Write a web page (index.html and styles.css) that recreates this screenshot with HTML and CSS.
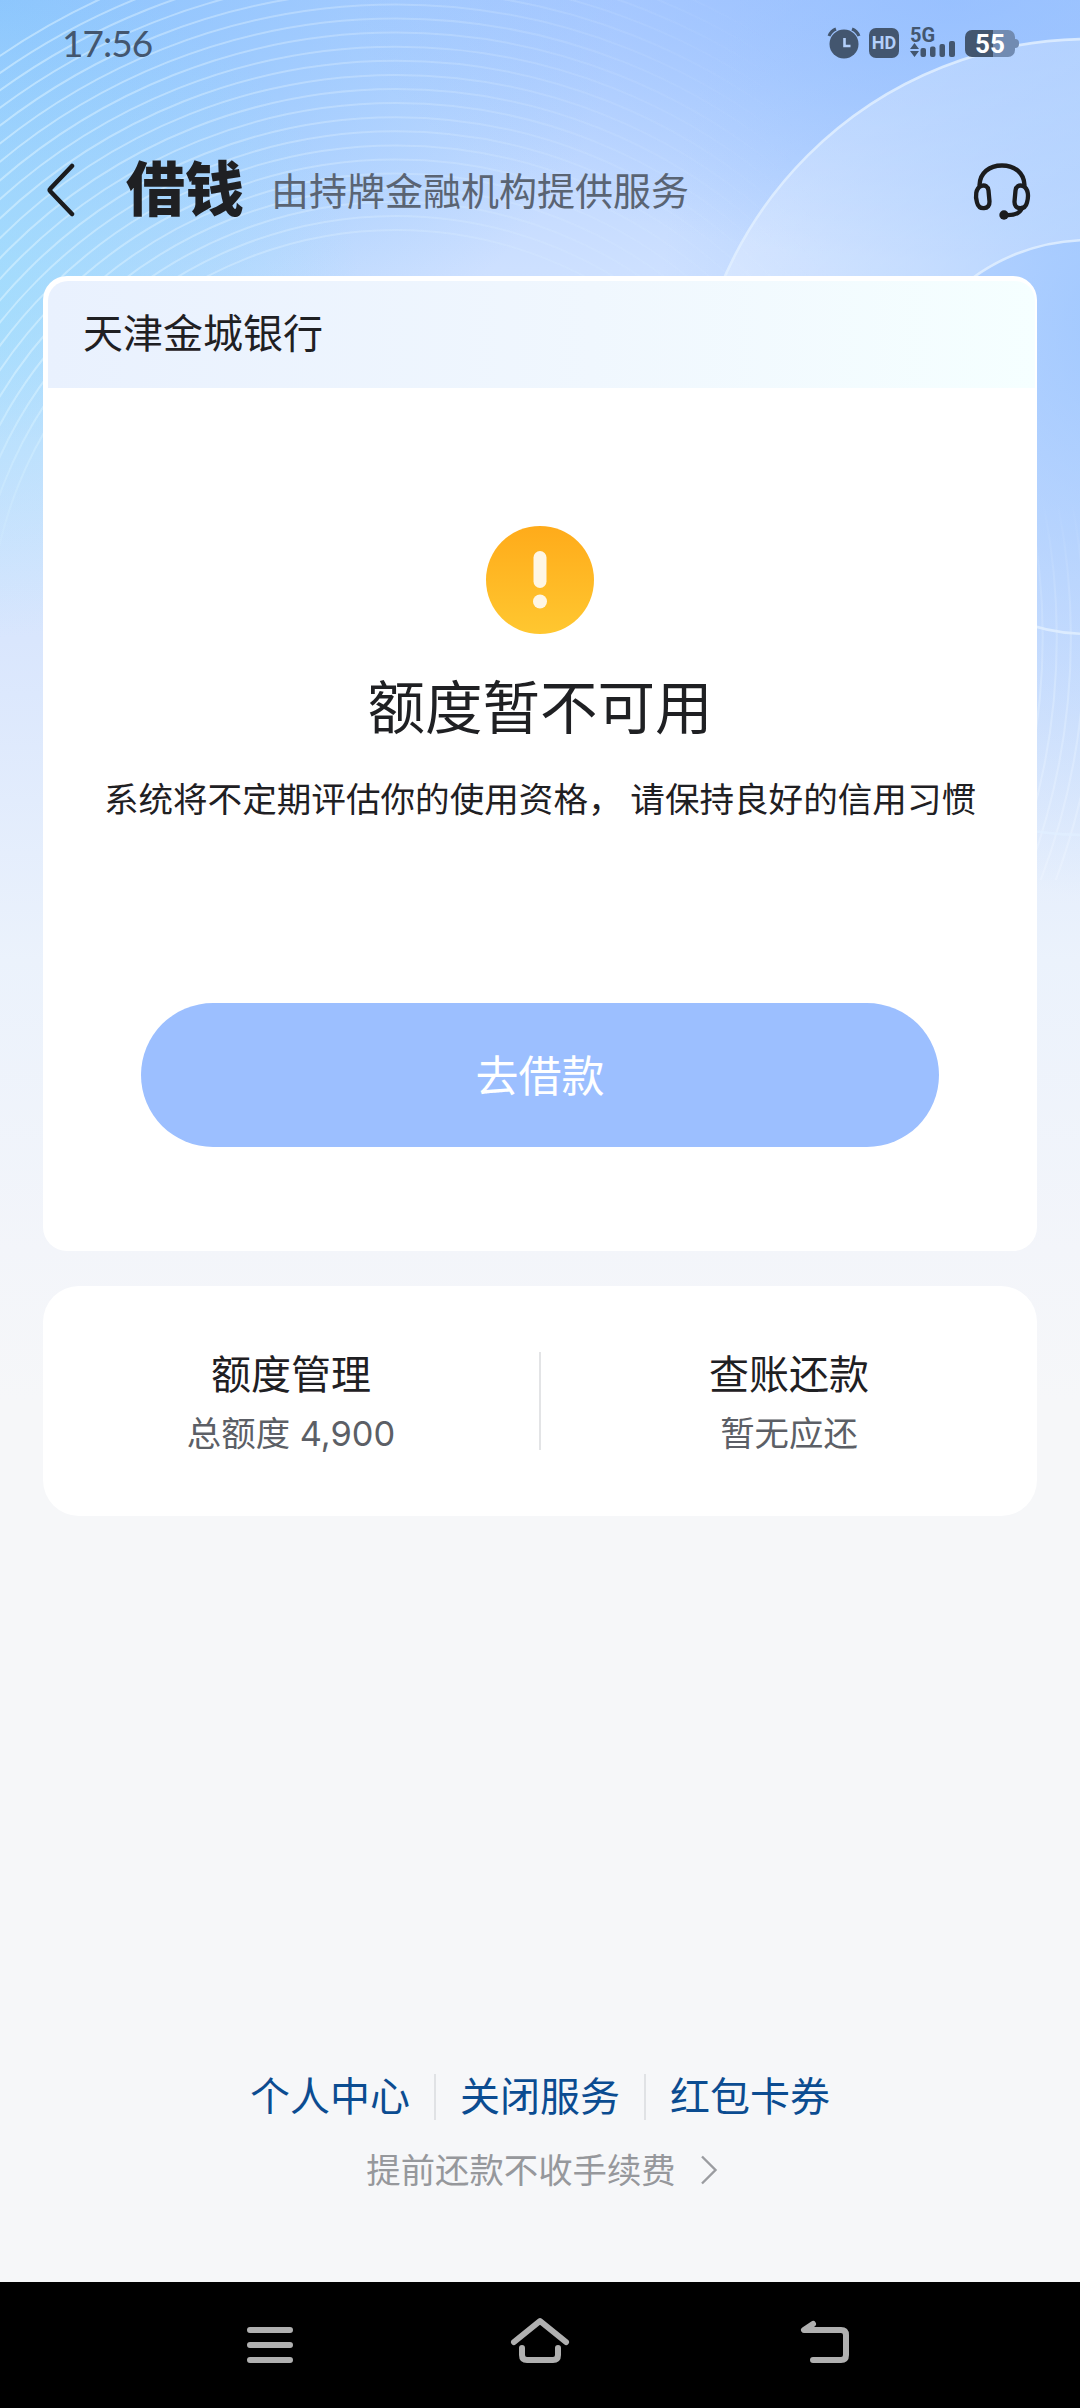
FILE: index.html
```html
<!DOCTYPE html>
<html lang="zh-CN">
<head>
    <meta charset="utf-8">
    <meta name="viewport" content="width=device-width, initial-scale=1.0">
    <title>借钱</title>
    <link rel="stylesheet" href="styles.css">
</head>
<body>
    <svg class="bg-lines" viewBox="0 0 1080 1300" aria-hidden="true">
        <defs>
            <linearGradient id="ringFade" gradientUnits="userSpaceOnUse" x1="0" y1="350" x2="800" y2="150">
                <stop offset="0" stop-color="#d8f2ff" stop-opacity=".62"/>
                <stop offset=".45" stop-color="#d8ecff" stop-opacity=".42"/>
                <stop offset="1" stop-color="#d8ecff" stop-opacity="0"/>
            </linearGradient>
            <linearGradient id="ringFadeRight" gradientUnits="userSpaceOnUse" x1="0" y1="500" x2="0" y2="880">
                <stop offset="0" stop-color="#e4f1ff" stop-opacity="0"/>
                <stop offset=".5" stop-color="#e4f1ff" stop-opacity=".4"/>
                <stop offset="1" stop-color="#f0f6ff" stop-opacity=".4"/>
            </linearGradient>
            <linearGradient id="fadeDown" x1="0" y1="0" x2="0" y2="1">
                <stop offset=".6" stop-color="#fff"/>
                <stop offset="1" stop-color="#000"/>
            </linearGradient>
            <mask id="topOnly" maskUnits="userSpaceOnUse" x="0" y="0" width="1000" height="620">
                <rect width="1000" height="620" fill="url(#fadeDown)"/>
            </mask>
            <clipPath id="rightOnly"><rect x="1030" y="480" width="50" height="400"/></clipPath>
            <linearGradient id="discFill" gradientUnits="userSpaceOnUse" x1="760" y1="240" x2="1080" y2="560">
                <stop offset="0" stop-color="#fff" stop-opacity=".26"/>
                <stop offset=".5" stop-color="#fff" stop-opacity=".2"/>
                <stop offset="1" stop-color="#fff" stop-opacity="0"/>
            </linearGradient>
            <g id="rings" fill="none" stroke-width="2"></g>
        </defs>
        <g mask="url(#topOnly)"><use href="#rings" stroke="url(#ringFade)"/></g>
        <g clip-path="url(#rightOnly)"><use href="#rings" stroke="url(#ringFadeRight)"/></g>
        <path fill="url(#discFill)" fill-rule="evenodd" d="M691 437a398 398 0 1 0 796 0a398 398 0 1 0-796 0zM892 437a197 197 0 1 0 394 0a197 197 0 1 0-394 0z"/>
        <g fill="none" stroke="#e0efff" stroke-width="2.6" stroke-opacity=".85">
            <circle cx="1089" cy="437" r="398"/>
            <circle cx="1089" cy="437" r="197"/>
        </g>
    </svg>

    <div class="status-bar">
        <span class="time">17:56</span>
        <div class="status-icons">
            <svg class="ic-alarm" viewBox="0 0 34 32">
                <circle cx="17" cy="17" r="14.5" fill="#43566f"/>
                <path d="M2 9Q4 4 9 2M25 2Q30 4 32 9" fill="none" stroke="#43566f" stroke-width="3"/>
                <path d="M17.500 11v8h6" fill="none" stroke="#b3d0fb" stroke-width="2.600"/>
            </svg>
            <span class="hd">HD</span>
            <div class="signal">
                <span class="net">5G</span>
                <svg viewBox="0 0 46 17">
                    <path d="M4.500 0l4.500 6H0zM4.500 14l4.500-6H0z" fill="#43566f"/>
                    <g fill="#43566f">
                        <rect x="10.500" y="5" width="5.500" height="9" rx="2"/>
                        <rect x="20" y="3.500" width="5.500" height="10.500" rx="2"/>
                        <rect x="29.500" y="1" width="5.500" height="13" rx="2"/>
                        <rect x="39" y="-2" width="6" height="16" rx="2"/>
                    </g>
                </svg>
            </div>
            <div class="battery">55</div>
        </div>
    </div>

    <header class="header">
        <svg class="back" viewBox="0 0 30 54"><path d="M26 3L4.500 25.500q-1.500 1.500 0 3L26 51" fill="none" stroke="#1b1c1e" stroke-width="4.500" stroke-linecap="round"/></svg>
        <h1>借钱</h1>
        <span class="subtitle">由持牌金融机构提供服务</span>
        <svg class="service" viewBox="0 0 60 58">
            <g fill="none" stroke="#1b1c1e" stroke-width="4.300" stroke-linecap="round" stroke-linejoin="round">
                <path d="M7.500 23C8 11 17 3.500 30 3.500S52 11 52.500 23"/>
                <path d="M9 24c4-1.500 7 .5 7.500 4.500l1 11c.2 4-2 6.500-5.500 6.700c-3.500.2-6-1.700-7-5.700c-1.800-6-1.500-14 4-16.500z"/>
                <path d="M51 24c-4-1.500-7 .5-7.500 4.500l-1 11c-.2 4 2 6.500 5.500 6.700c3.500.2 6-1.700 7-5.700c1.800-6 1.500-14-4-16.500z"/>
                <path d="M50 46q-3 8-17 7"/>
            </g>
            <circle cx="32" cy="53" r="4.700" fill="#1b1c1e"/>
        </svg>
    </header>

    <main>
        <section class="card loan-card">
            <div class="bank">天津金城银行</div>
            <svg class="warn" viewBox="0 0 108 108">
                <defs>
                    <linearGradient id="warnFill" x1="0" y1="0" x2="0" y2="1">
                        <stop offset="0" stop-color="#ffab1a"/>
                        <stop offset="1" stop-color="#ffc730"/>
                    </linearGradient>
                </defs>
                <circle cx="54" cy="54" r="54" fill="url(#warnFill)"/>
                <rect x="47.500" y="25" width="13" height="37" rx="6.500" fill="#fff6e4"/>
                <circle cx="54" cy="75.500" r="7" fill="#fff6e4"/>
            </svg>
            <h2>额度暂不可用</h2>
            <p class="tip">系统将不定期评估你的使用资格， 请保持良好的信用习惯</p>
            <button class="borrow">去借款</button>
        </section>

        <section class="card info-card">
            <div class="info">
                <div class="info-title">额度管理</div>
                <div class="info-desc">总额度 4,900</div>
            </div>
            <div class="info">
                <div class="info-title">查账还款</div>
                <div class="info-desc">暂无应还</div>
            </div>
        </section>
    </main>

    <footer class="footer">
        <nav class="links">
            <a>个人中心</a>
            <a>关闭服务</a>
            <a>红包卡券</a>
        </nav>
        <div class="notice">
            <span>提前还款不收手续费</span>
            <svg viewBox="0 0 18 30"><path d="M2 1.500L15.500 15L2 28.500" fill="none" stroke="#9a9ca0" stroke-width="2.400"/></svg>
        </div>
    </footer>

    <div class="nav-bar">
        <svg viewBox="0 0 60 60"><path d="M10 15h40M10 30h40M10 45h40" class="nav-line"/></svg>
        <svg viewBox="0 0 60 60"><path d="M4 27L30 6L56 27M12 33v7q0 5 5 5h26q5 0 5-5v-7" class="nav-line"/></svg>
        <svg viewBox="0 0 60 60"><path d="M18 9L9 15H46q5 0 5 5V40q0 5-5 5H18" class="nav-line"/></svg>
    </div>

    <script>
        // 左侧同心圆弧线
        const rings = document.getElementById('rings');
        for (let r = 407; r <= 706; r += 14.1) {
            const c = document.createElementNS('http://www.w3.org/2000/svg', 'circle');
            c.setAttribute('cx', 396);
            c.setAttribute('cy', 637);
            c.setAttribute('r', r);
            rings.appendChild(c);
        }
    </script>
</body>
</html>
```
FILE: styles.css
```css
* {
    box-sizing: border-box;
}

body {
    margin: 0;
    width: 1080px;
    height: 2408px;
    display: flex;
    flex-direction: column;
    position: relative;
    overflow: hidden;
    font-family: 'Noto Sans CJK SC', sans-serif;
    color: #1f2023;
    background:
        radial-gradient(ellipse 400px 340px at -40px 300px, rgba(155, 222, 252, .75), rgba(155, 222, 252, 0)),
        radial-gradient(ellipse 460px 580px at 1120px 320px, rgba(150, 194, 255, .8), rgba(150, 194, 255, 0)),
        radial-gradient(ellipse 600px 260px at 950px 0, rgba(146, 188, 255, .75), rgba(146, 188, 255, 0)),
        radial-gradient(ellipse 620px 440px at 0 0, rgba(138, 196, 253, .95), rgba(150, 205, 254, 0)),
        linear-gradient(180deg, #afcdff 0, #bcd6ff 110px, #cde0ff 270px, #d9e6fd 640px, #ebf2fc 960px, #f3f5fa 1250px, #f6f7f9 1400px);
}

.bg-lines {
    position: absolute;
    top: 0;
    left: 0;
    width: 1080px;
    height: 1300px;
    z-index: -1;
}

.status-bar {
    display: flex;
    justify-content: space-between;
    align-items: center;
    height: 85px;
    padding: 0 60px 0 62px;
}

.time {
    font-family: Lato, sans-serif;
    font-size: 37px;
    letter-spacing: -1px;
    color: #43566f;
}

.status-icons {
    display: flex;
    align-items: center;
    height: 34px;
}

.ic-alarm {
    width: 34px;
    height: 32px;
}

.hd {
    width: 30px;
    height: 30px;
    margin-left: 8px;
    border-radius: 7px;
    background: #43566f;
    color: #b3d0fb;
    font: bold 18px/30px Roboto, sans-serif;
    text-align: center;
}

.signal {
    width: 46px;
    height: 30px;
    margin-left: 11px;
    display: flex;
    flex-direction: column;
}

.net {
    height: 17px;
    font: bold 20px/15px Roboto, sans-serif;
    color: #43566f;
}

.signal svg {
    width: 46px;
    height: 17px;
    overflow: visible;
    flex: none;
}

.battery {
    position: relative;
    width: 50px;
    height: 27px;
    margin: 2px 5px 0 9px;
    border-radius: 7px;
    background: linear-gradient(90deg, #43566f 55%, #718bb2 55%);
    color: #fff;
    font: bold 26px/28px Roboto, sans-serif;
    text-align: center;
}

.battery::after {
    content: '';
    position: absolute;
    right: -4px;
    top: 9px;
    width: 4px;
    height: 9px;
    border-radius: 0 4px 4px 0;
    background: #718bb2;
}

.header {
    display: flex;
    align-items: center;
    height: 191px;
    padding: 18px 48px 0 46px;
}

.back {
    width: 30px;
    height: 54px;
}

h1 {
    margin: -7px 0 0 50px;
    font-size: 59px;
    font-weight: 900;
    line-height: 80px;
}

.subtitle {
    margin: -2px 0 0 27px;
    font-size: 38px;
    line-height: 56px;
    color: #5a6473;
}

.service {
    width: 60px;
    height: 58px;
    margin: 2px 0 0 auto;
}

main {
    padding: 0 43px;
}

.card {
    background: #fff;
}

.loan-card {
    height: 975px;
    padding: 5px 5px 0;
    border-radius: 24px;
    display: flex;
    flex-direction: column;
    align-items: center;
}

.bank {
    align-self: stretch;
    height: 107px;
    margin-right: -3px;
    padding-left: 35px;
    border-radius: 20px 20px 0 0;
    background: linear-gradient(90deg, #e9f1fe, #f0f7fe 55%, #f5ffff);
    font-size: 40px;
    line-height: 101px;
}

.warn {
    width: 108px;
    height: 108px;
    margin-top: 138px;
}

h2 {
    margin: 30px 0 0;
    font-size: 57.5px;
    font-weight: 400;
    line-height: 80px;
}

.tip {
    margin: 28px 0 0;
    font-size: 34.6px;
    line-height: 50px;
    white-space: nowrap;
}

.borrow {
    width: 798px;
    height: 144px;
    margin-top: 181px;
    padding: 0 0 5px;
    border: none;
    border-radius: 72px;
    background: #9cbfff;
    color: #fff;
    font-family: inherit;
    font-size: 43px;
}

.info-card {
    display: flex;
    height: 230px;
    margin-top: 35px;
    padding-top: 66px;
    border-radius: 36px;
}

.info {
    flex: 1;
    height: 98px;
    text-align: center;
}

.info + .info {
    border-left: 2px solid #e3e4e6;
}

.info-title {
    font-size: 40px;
    line-height: 40px;
}

.info-desc {
    margin-top: 22px;
    font-family: Inter, 'Noto Sans CJK SC', sans-serif;
    font-size: 34.4px;
    line-height: 40px;
    color: #5c5f66;
}

.footer {
    margin-top: auto;
    height: 208px;
    display: flex;
    flex-direction: column;
    align-items: center;
}

.links {
    display: flex;
}

.links a {
    height: 46px;
    padding: 0 24px;
    font-size: 40px;
    line-height: 40px;
    color: #0b4c91;
}

.links a + a {
    border-left: 2px solid #e0e2e5;
}

.notice {
    display: flex;
    align-items: center;
    gap: 24px;
    margin-top: 26px;
    padding-left: 4px;
    font-size: 34.4px;
    line-height: 44px;
    color: #96989c;
}

.notice svg {
    width: 18px;
    height: 30px;
    margin-top: 4px;
}

.nav-bar {
    display: flex;
    gap: 210px;
    align-items: center;
    height: 126px;
    padding-left: 240px;
    background: #000;
}

.nav-bar svg {
    width: 60px;
    height: 60px;
}

.nav-bar svg:last-child {
    margin-left: 15px;
}

.nav-line {
    fill: none;
    stroke: #b0b0b0;
    stroke-width: 6;
    stroke-linecap: round;
    stroke-linejoin: round;
}
```
